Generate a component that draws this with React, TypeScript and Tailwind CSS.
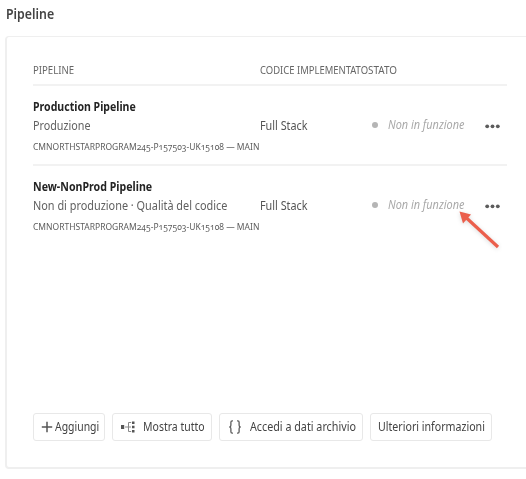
import type { ReactNode } from "react";

type PipelineRow = { name: string; nameScale: string; kind: string; kindScale: string };

const rows: PipelineRow[] = [
  {
    name: "Production Pipeline",
    nameScale: "scale-x-[0.845]",
    kind: "Produzione",
    kindScale: "scale-x-[0.86]",
  },
  {
    name: "New-NonProd Pipeline",
    nameScale: "scale-x-[0.85]",
    kind: "Non di produzione · Qualità del codice",
    kindScale: "scale-x-[0.87]",
  },
];

/** Condensed text run; the scale class sets how narrow it is. */
function Narrow({ scale, children }: { scale: string; children: ReactNode }) {
  return <span className={`inline-block origin-left whitespace-nowrap ${scale}`}>{children}</span>;
}

function Row({ name, nameScale, kind, kindScale, last }: PipelineRow & { last: boolean }) {
  return (
    <div className={`flex h-20 border-[#f2f2f2] ${last ? "" : "border-b-2"}`}>
      <div className="w-[226.5px] shrink-0 pt-[11px]">
        <div className="h-[19px] text-[12.5px] leading-[19px] font-bold text-[#242424]">
          <Narrow scale={nameScale}>{name}</Narrow>
        </div>
        <div className="h-[21px] text-[12.5px] leading-[20px] text-[#606060]">
          <Narrow scale={kindScale}>{kind}</Narrow>
        </div>
        <div className="h-5 text-[9.5px] leading-5 text-[#5c5c5c] oldstyle-nums">
          <Narrow scale="scale-x-[0.895]">CMNORTHSTARPROGRAM245-P157503-UK15108 — MAIN</Narrow>
        </div>
      </div>
      <div className="w-[112.5px] shrink-0 pt-[30px] text-[12.5px] leading-5 text-[#555555]">
        <Narrow scale="scale-x-[0.865]">Full Stack</Narrow>
      </div>
      <div className="mt-[29px] flex h-5 w-[113px] shrink-0 items-center text-[#a9a9a9]">
        <span className="mr-[10px] size-1.5 shrink-0 rounded-full bg-[#b5b5b5]" />
        <span className="text-[12.5px] leading-5 italic">
          <Narrow scale="scale-x-[0.87]">Non in funzione</Narrow>
        </span>
      </div>
      <svg className="mt-[38px] h-[5px] w-[15px] shrink-0 fill-[#5c5c5c]" viewBox="0 0 15 5">
        <circle cx="2.2" cy="2.3" r="1.9" />
        <circle cx="7.5" cy="2.3" r="1.9" />
        <circle cx="12.8" cy="2.3" r="1.9" />
      </svg>
    </div>
  );
}

function Button({ className, children }: { className: string; children: ReactNode }) {
  return (
    <button
      className={`flex h-7 shrink-0 items-center rounded-[3px] border border-[#e8e8e8] text-[12.5px] text-[#434343] ${className}`}
    >
      {children}
    </button>
  );
}

export default function App() {
  return (
    <div className="relative h-[479px] w-[526px] overflow-hidden bg-white font-['Noto_Sans','Open_Sans',sans-serif]">
      <h2 className="h-[36px] pt-1 pl-[6px] text-[13.5px] leading-5 font-semibold text-[#444444]">
        <Narrow scale="scale-x-[0.915]">Pipeline</Narrow>
      </h2>
      <div className="ml-[5px] flex h-[433px] w-[540px] flex-col rounded border-2 border-t border-[#efefef] pl-[26px]">
        <div className="flex h-[49px] w-[473.5px] shrink-0 items-center border-b-2 border-[#f2f2f2] pt-[19px] text-[10px] text-[#666666]">
          <span className="w-[226.5px]">
            <Narrow scale="scale-x-[0.96]">PIPELINE</Narrow>
          </span>
          <span className="w-[108.5px]">
            <Narrow scale="scale-x-[0.945]">CODICE IMPLEMENTATO</Narrow>
          </span>
          <Narrow scale="scale-x-[0.99]">STATO</Narrow>
        </div>
        <div className="w-[473.5px]">
          {rows.map((r, i) => (
            <Row key={r.name} {...r} last={i === rows.length - 1} />
          ))}
        </div>
        <div className="mt-auto mb-[26px] flex gap-[7px]">
          <Button className="w-[72px] gap-[2px] pl-[7px]">
            <svg className="size-3 shrink-0 stroke-[#555555]" viewBox="0 0 12 12" fill="none" strokeWidth="1.5">
              <path d="M6 .8v10.4M.8 6h10.4" />
            </svg>
            <Narrow scale="scale-x-[0.835]">Aggiungi</Narrow>
          </Button>
          <Button className="w-[100px] gap-[6.5px] pl-[7px]">
            <svg className="h-3 w-4 shrink-0" viewBox="0 0 16 12">
              <path d="M1 4h3.2v4H1zM12 .5h2.5v2.4H12zM12 4.8h2.5v2.4H12zM12 9.1h2.5v2.4H12z" fill="#555555" />
              <path d="M5 6h6M11.2 1.5H8.5v9h2.7" fill="none" stroke="#888888" />
            </svg>
            <Narrow scale="scale-x-[0.84]">Mostra tutto</Narrow>
          </Button>
          <Button className="w-[144px] gap-[8px] pl-[8px]">
            <svg className="mb-px h-[14px] w-[14px] shrink-0 stroke-[#5c5c5c]" viewBox="0 0 14 15" fill="none" strokeWidth="1.4">
              <path d="M4.8 1H4Q2.6 1 2.6 2.5v3Q2.6 7.3 1 7.5q1.6.2 1.6 2v3Q2.6 14 4 14h.8M9.2 1h.8q1.4 0 1.4 1.5v3q0 1.8 1.6 2-1.6.2-1.6 2v3q0 1.5-1.4 1.5h-.8" />
            </svg>
            <Narrow scale="scale-x-[0.86]">Accedi a dati archivio</Narrow>
          </Button>
          <Button className="w-[122px] pl-[7px]">
            <Narrow scale="scale-x-[0.85]">Ulteriori informazioni</Narrow>
          </Button>
        </div>
      </div>
      <svg className="absolute top-[209px] left-[457px] h-[42px] w-[44px] drop-shadow-sm" viewBox="0 0 44 42">
        <path d="M9 8.5 41 38" stroke="#eb5f4c" strokeWidth="3.2" />
        <path d="M2.5 2.5 14 5.5 6 14.5Z" fill="#eb5f4c" />
      </svg>
    </div>
  );
}
